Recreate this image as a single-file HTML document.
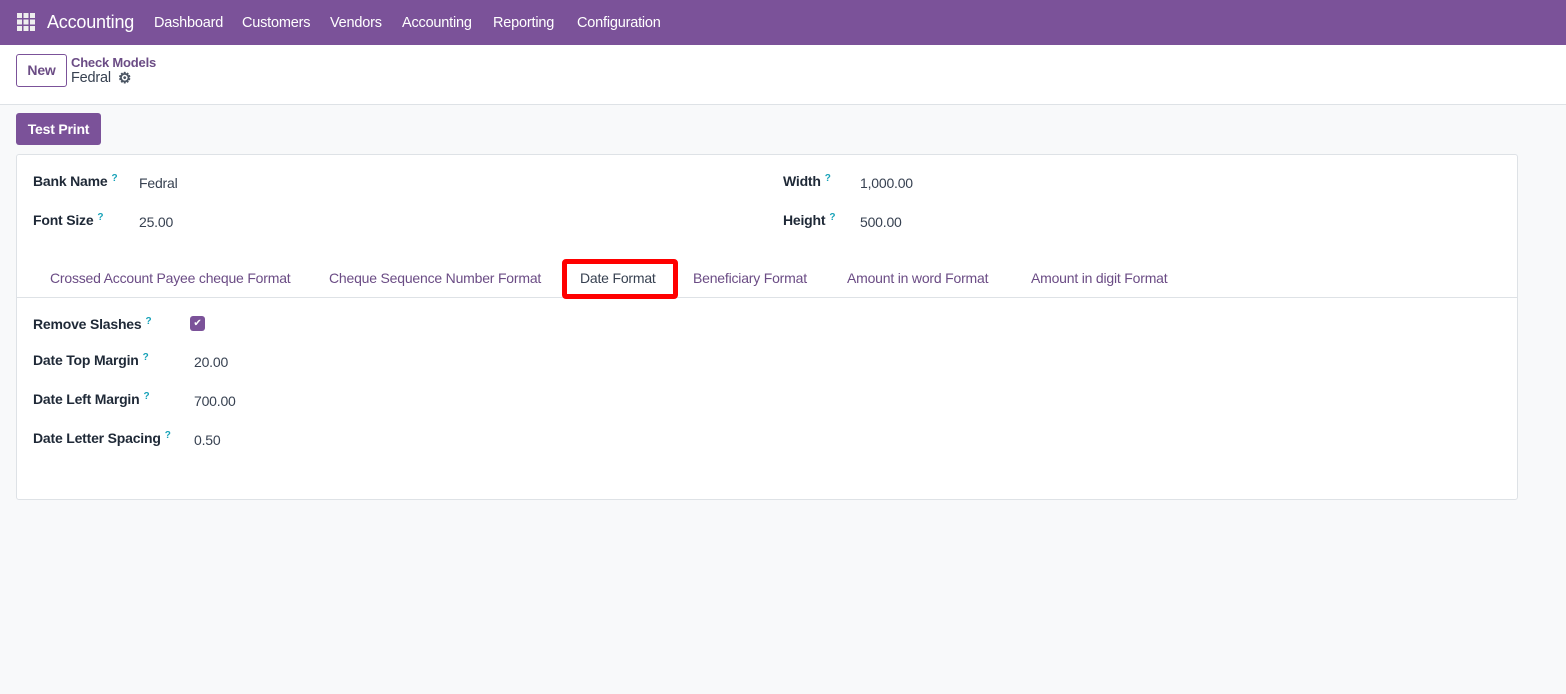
<!DOCTYPE html>
<html><head><meta charset="utf-8"><style>
*{box-sizing:border-box;margin:0;padding:0}
body{width:1566px;height:694px;background:#f8f9fa;font-family:"Liberation Sans",sans-serif;font-size:14px;color:#374151;position:relative;overflow:hidden;letter-spacing:-0.2px}
.a{position:absolute;white-space:nowrap}
.nav{position:absolute;left:0;top:0;width:1566px;height:45px;background:#7b5299}
.nav .a{color:#fff;font-size:14.5px;top:15px}
.ctl{position:absolute;left:0;top:45px;width:1566px;height:60px;background:#fff;border-bottom:1px solid #dee2e6}
.card{position:absolute;left:16px;top:154px;width:1502px;height:346px;background:#fff;border:1px solid #dee2e6;border-radius:3px}
.lbl{font-weight:bold;color:#1f2937}
.q{color:#17a2b8;font-size:10px;font-weight:bold;vertical-align:top;margin-left:4px}
.tab{color:#6b4c85;top:270px}
</style></head><body>
<div class="nav">
<svg class="a" style="left:17px;top:13px" width="18" height="18" viewBox="0 0 18 18" fill="#eee"><rect x="0" y="0" width="5" height="5"/><rect x="6.5" y="0" width="5" height="5"/><rect x="13" y="0" width="5" height="5"/><rect x="0" y="6.5" width="5" height="5"/><rect x="6.5" y="6.5" width="5" height="5"/><rect x="13" y="6.5" width="5" height="5"/><rect x="0" y="13" width="5" height="5"/><rect x="6.5" y="13" width="5" height="5"/><rect x="13" y="13" width="5" height="5"/></svg>
<div class="a" style="left:47px;top:12px;font-size:18px">Accounting</div>
<div class="a" style="left:154px">Dashboard</div>
<div class="a" style="left:242px">Customers</div>
<div class="a" style="left:330px">Vendors</div>
<div class="a" style="left:402px">Accounting</div>
<div class="a" style="left:493px">Reporting</div>
<div class="a" style="left:577px">Configuration</div>
</div>
<div class="ctl">
<div class="a" style="left:16px;top:9px;width:51px;height:33px;border:1px solid #7b5299;border-radius:3px;color:#6b4c85;text-align:center;line-height:31px;font-weight:bold">New</div>
<div class="a" style="left:71px;top:10px;color:#6b4c85;font-size:13px;font-weight:bold">Check Models</div>
<div class="a" style="left:71px;top:25px;color:#374151;font-size:14.5px">Fedral</div>
<div class="a" style="left:118px;top:24px;color:#4b5563;font-size:15px;font-weight:bold">⚙</div>
</div>
<div class="a" style="left:16px;top:113px;width:85px;height:32px;background:#7b5299;border-radius:3px;color:#fff;font-weight:bold;text-align:center;line-height:32px">Test Print</div>
<div class="card"></div>
<div class="a lbl" style="left:33px;top:173px">Bank Name<span class="q">?</span></div>
<div class="a" style="left:139px;top:175px">Fedral</div>
<div class="a lbl" style="left:33px;top:212px">Font Size<span class="q">?</span></div>
<div class="a" style="left:139px;top:214px">25.00</div>
<div class="a lbl" style="left:783px;top:173px">Width<span class="q">?</span></div>
<div class="a" style="left:860px;top:175px">1,000.00</div>
<div class="a lbl" style="left:783px;top:212px">Height<span class="q">?</span></div>
<div class="a" style="left:860px;top:214px">500.00</div>
<div class="a" style="left:17px;top:297px;width:1500px;height:1px;background:#dee2e6"></div>
<div class="a tab" style="left:50px">Crossed Account Payee cheque Format</div>
<div class="a tab" style="left:329px">Cheque Sequence Number Format</div>
<div class="a" style="left:562px;top:259px;width:116px;height:40px;border:5px solid #ff0000;border-radius:4px;background:#fff"></div>
<div class="a" style="left:580px;top:270px;color:#374151">Date Format</div>
<div class="a tab" style="left:693px">Beneficiary Format</div>
<div class="a tab" style="left:847px">Amount in word Format</div>
<div class="a tab" style="left:1031px">Amount in digit Format</div>
<div class="a lbl" style="left:33px;top:316px">Remove Slashes<span class="q">?</span></div>
<div class="a" style="left:190px;top:316px;width:15px;height:15px;background:#7b5299;border-radius:3px;color:#fff;font-size:10px;text-align:center;line-height:15px">✔</div>
<div class="a lbl" style="left:33px;top:352px">Date Top Margin<span class="q">?</span></div>
<div class="a" style="left:194px;top:354px">20.00</div>
<div class="a lbl" style="left:33px;top:391px">Date Left Margin<span class="q">?</span></div>
<div class="a" style="left:194px;top:393px">700.00</div>
<div class="a lbl" style="left:33px;top:430px">Date Letter Spacing<span class="q">?</span></div>
<div class="a" style="left:194px;top:432px">0.50</div>
</body></html>
